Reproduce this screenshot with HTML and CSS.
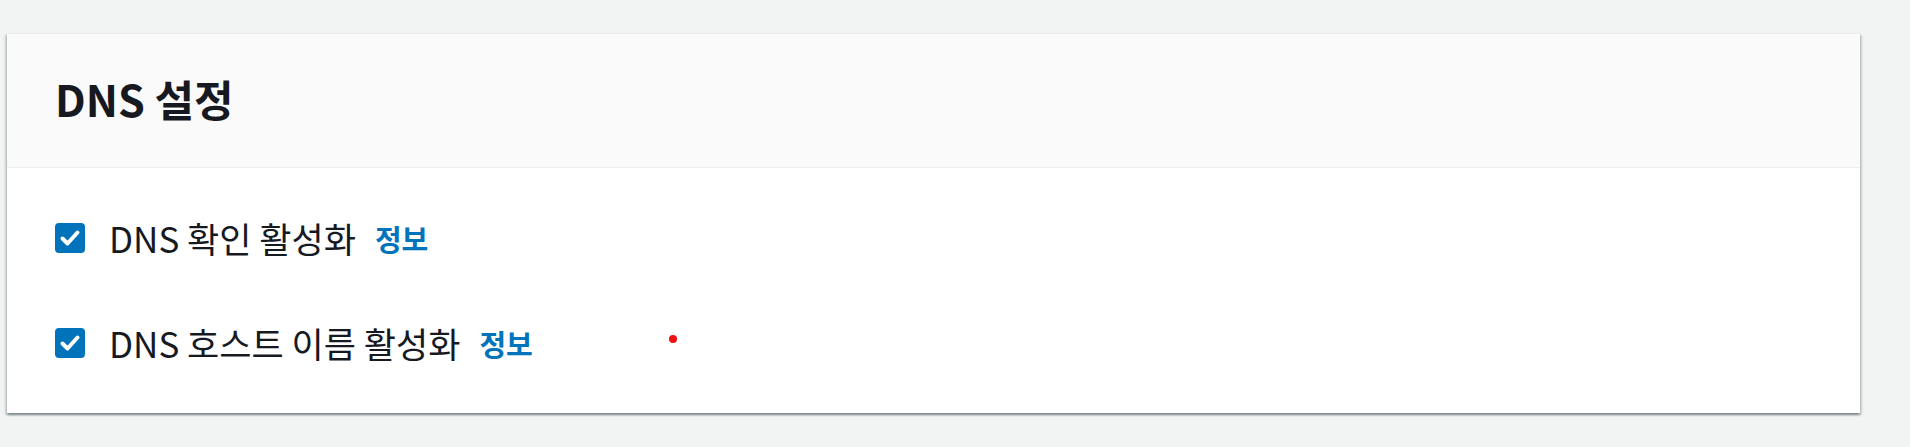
FILE: index.html
```
<!DOCTYPE html>
<html>
<head>
    <meta content="text/html; charset=utf-8" http-equiv="Content-Type">
    <title>DNS 설정</title>
    <link rel="stylesheet" href="styles.css">
</head>

<body>
    <div class="panel">
        <div class="panel-header">
            <h2>DNS 설정</h2>
        </div>

        <div class="panel-body">
            <label class="check-row">
                <span class="checkbox">
                    <svg viewBox="0 0 30 30"><polyline points="7.5,15.5 12.5,20.5 22.5,9.5"></polyline></svg>
                </span>
                <span class="label-text">DNS 확인 활성화</span>
                <a class="info-link" href="#">정보</a>
            </label>

            <label class="check-row">
                <span class="checkbox">
                    <svg viewBox="0 0 30 30"><polyline points="7.5,15.5 12.5,20.5 22.5,9.5"></polyline></svg>
                </span>
                <span class="label-text">DNS 호스트 이름 활성화</span>
                <a class="info-link" href="#">정보</a>
                <span class="cursor-dot"></span>
            </label>
        </div>
    </div>
</body>
</html>
```

FILE: styles.css
```
body {
    font-family: "Noto Sans CJK KR", "Noto Sans", sans-serif;
    margin: 0;
    padding: 33px 50px 0 7px;
    background: #f2f3f3;
    color: #16191f;
    height: 447px;
    box-sizing: border-box;
    overflow: hidden;
}

.panel {
    background: #ffffff;
    border-top: 1px solid #eaeded;
    box-shadow: 0 2px 2px 0 rgba(0, 28, 36, 0.3),
                2px 2px 2px 0 rgba(0, 28, 36, 0.15),
                -2px 2px 2px 0 rgba(0, 28, 36, 0.15);
}

.panel-header {
    display: flex;
    align-items: center;
    height: 133px;
    padding: 0 48px;
    background: #fafafa;
    border-bottom: 1px solid #eaeded;
}

h2 {
    margin: 0 0 4px;
    font-size: 43px;
    line-height: 1.2;
    font-weight: 700;
    color: #16191f;
}

.panel-body {
    display: flex;
    flex-direction: column;
    gap: 55px;
    padding: 45px 48px;
}

.check-row {
    position: relative;
    display: flex;
    align-items: center;
    height: 50px;
}

.checkbox {
    display: flex;
    width: 30px;
    height: 30px;
    border-radius: 4px;
    background: #0073bb;
    margin-right: 24px;
}

.checkbox svg {
    width: 30px;
    height: 30px;
}

.checkbox polyline {
    fill: none;
    stroke: #ffffff;
    stroke-width: 4;
    stroke-linecap: round;
    stroke-linejoin: round;
}

.label-text {
    font-size: 35px;
    line-height: 1.2;
    color: #16191f;
}

.info-link {
    margin-left: 19px;
    font-size: 29px;
    line-height: 1.2;
    font-weight: 700;
    color: #0073bb;
    text-decoration: none;
}

/* stray pointer mark */
.cursor-dot {
    position: absolute;
    left: 614px;
    top: 17px;
    width: 8px;
    height: 8px;
    border-radius: 50%;
    background: #ee1111;
}
```
